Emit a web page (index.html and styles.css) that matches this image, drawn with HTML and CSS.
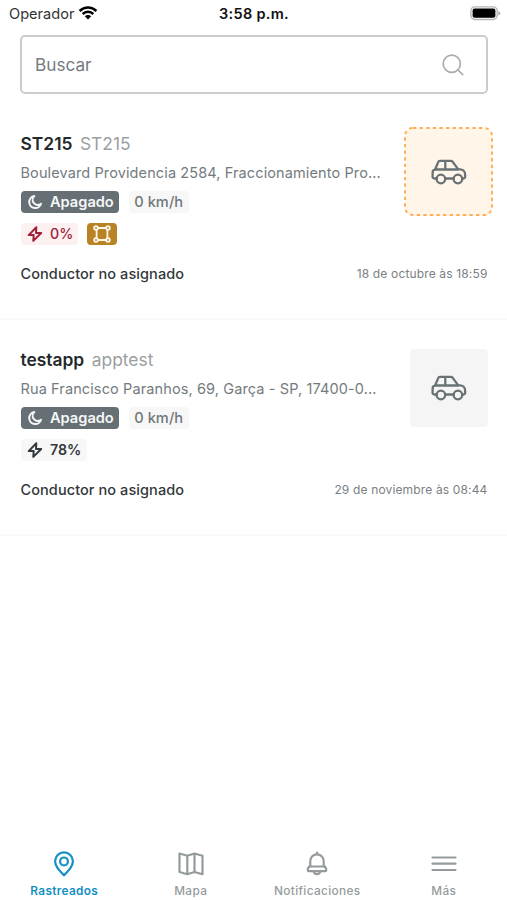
FILE: index.html
```
<!DOCTYPE html>
<html lang="es">
<head>
<meta charset="utf-8">
<title>Rastreados</title>
<link rel="stylesheet" href="styles.css">
</head>
<body>
<svg class="defs" width="0" height="0" aria-hidden="true">
  <symbol id="car" viewBox="0 0 36 26">
    <path d="M5.900 19.500H3.200a1.600 1.600 0 0 1-1.600-1.600v-4.100c0-1.800.8-2.900 2.400-3.100L7.300 2.900a1.700 1.700 0 0 1 1.600-1.100h10.800a2.400 2.400 0 0 1 2 1l5.600 7.600h1.800a5 5 0 0 1 5 5v2.500a1.600 1.600 0 0 1-1.600 1.600h-1.500M14 19.500h8.800M4.200 10.500h23M14.300 1.800v8.700"/>
    <circle cx="9.900" cy="20" r="4.300"/><circle cx="26.900" cy="20" r="4.300"/>
  </symbol>
  <symbol id="moon" viewBox="0 0 16 16">
    <path d="M7.400 2.100A6 6 0 1 0 14 9.700 4.700 4.700 0 0 1 7.400 2.100Z"/>
  </symbol>
  <symbol id="bolt" viewBox="0 0 16 16">
    <path d="M9.300 1.300 1.700 9.100h5L6.300 14.900l7.900-7.900H9Z"/>
  </symbol>
</svg>
<header class="status">
  <div class="carrier">Operador
    <svg width="20" height="14" viewBox="0 0 20 14"><path d="M1.600 5a12 12 0 0 1 16.800 0M4.700 8a7.600 7.600 0 0 1 10.600 0"/><path class="solid" d="M10 13.400 6.800 10.200a4.600 4.600 0 0 1 6.400 0Z"/></svg>
  </div>
  <div class="clock">3:58 p.m.</div>
  <svg class="battery" width="31" height="15" viewBox="0 0 31 15"><rect class="shell" x=".9" y=".9" width="26.200" height="12.600" rx="4"/><rect x="2.600" y="2.600" width="22.800" height="9.200" rx="1.800"/><path class="tip" d="M28.300 5v4.600q2-.8 2-2.300t-2-2.300Z"/></svg>
</header>
<div class="search">
  <span>Buscar</span>
  <svg width="22" height="22" viewBox="0 0 22 22"><circle cx="9.800" cy="9.800" r="8.600"/><path d="m16 16 4.700 4.700"/></svg>
</div>
<main>
  <article class="card">
    <div class="top">
      <div class="info">
        <h2>ST215<span class="alias">ST215</span></h2>
        <p class="address">Boulevard Providencia 2584, Fraccionamiento Pro...</p>
        <div class="chips"><span class="chip off"><svg><use href="#moon"/></svg>Apagado</span><span class="chip speed">0 km/h</span></div>
        <div class="chips"><span class="chip low"><svg><use href="#bolt"/></svg>0%</span><span class="chip fence"><svg viewBox="0 0 18 18"><path d="M4.800 3H13.200M4.800 15H13.200M3.600 4.800V13.200M14.400 4.800V13.200"/><circle cx="3" cy="3" r="1.800"/><circle cx="15" cy="3" r="1.800"/><circle cx="3" cy="15" r="1.800"/><circle cx="15" cy="15" r="1.800"/></svg></span></div>
      </div>
      <div class="thumb alert"><svg class="dash" width="89" height="89"><rect x="1" y="1" width="87" height="87" rx="8"/></svg><svg class="car"><use href="#car"/></svg></div>
    </div>
    <div class="bottom"><span class="driver">Conductor no asignado</span><time>18 de octubre às 18:59</time></div>
  </article>
  <article class="card">
    <div class="top">
      <div class="info">
        <h2>testapp<span class="alias">apptest</span></h2>
        <p class="address">Rua Francisco Paranhos, 69, Garça - SP, 17400-0...</p>
        <div class="chips"><span class="chip off"><svg><use href="#moon"/></svg>Apagado</span><span class="chip speed">0 km/h</span></div>
        <div class="chips"><span class="chip level"><svg><use href="#bolt"/></svg>78%</span></div>
      </div>
      <div class="thumb"><svg class="car"><use href="#car"/></svg></div>
    </div>
    <div class="bottom"><span class="driver">Conductor no asignado</span><time>29 de noviembre às 08:44</time></div>
  </article>
</main>
<nav>
  <a class="active"><svg viewBox="0 0 26 26"><path d="M13 24.300C7.500 18.500 4.100 14.800 4.100 10.200a8.900 8.900 0 0 1 17.800 0c0 4.600-3.400 8.300-8.900 14.100Z"/><circle cx="13" cy="10.400" r="3.900"/></svg>Rastreados</a>
  <a><svg viewBox="0 0 26 26"><path d="M1.500 2.500 9.300 4.700 16.500 2.500 24.500 4.700V23.200L16.500 21 9.300 23.200 1.500 21ZM9.300 4.700V23.200M16.500 2.500V21"/></svg>Mapa</a>
  <a><svg viewBox="0 0 26 26"><path d="M13 1.500v2M6.300 15.500V10a6.700 6.700 0 0 1 13.400 0v5.500M6.300 15.500q-2.500.8-2.500 2.800v1q0 .8.8.800H21.400q.8 0 .8-.8v-1q0-2-2.500-2.800M5 15.500H21M9.800 20.700a3.300 3.300 0 0 0 6.400 0"/></svg>Notificaciones</a>
  <a><svg viewBox="0 0 26 26"><path d="M1.500 6.500H24.500M1.500 12.700H24.500M1.500 19H24.500"/></svg>Más</a>
</nav>
</body>
</html>
```
FILE: styles.css
```
* { box-sizing: border-box; }
body { margin: 0; height: 900px; display: flex; flex-direction: column; background: #fff; color: #32383b; font-family: Inter, sans-serif; overflow: hidden; }
h2, p { margin: 0; }
svg { display: block; flex: none; fill: none; stroke: currentColor; stroke-width: 2; stroke-linecap: round; stroke-linejoin: round; }
.defs { position: absolute; }
.status { height: 35px; padding: 0 6px 8px 7px; display: grid; grid-template-columns: 1fr auto 1fr; align-items: center; color: #111; }
.carrier { display: flex; align-items: center; gap: 4px; padding-left: 2px; font-size: 14.600px; color: #333; }
.carrier svg { position: relative; top: -1px; color: #000; stroke-width: 2.500; stroke-linecap: butt; }
.carrier .solid { fill: #000; stroke: none; }
.clock { font-size: 14.500px; font-weight: 600; letter-spacing: .3px; }
.battery { justify-self: end; stroke: none; fill: #000; }
.battery .shell { fill: none; stroke: #b5b5b5; stroke-width: 1.400; }
.battery .tip { fill: #aaa; }
.search { height: 59px; margin: 0 19px 0 20px; padding: 0 22px 0 13px; display: flex; align-items: center; justify-content: space-between; border: 2px solid #ccc; border-radius: 5px; font-size: 17.200px; color: #747b7e; }
.search svg { color: #a9adaf; stroke-width: 1.700; }
main { flex: 1; padding-top: 9px; }
.card { height: 216.400px; padding: 29.500px 19.500px 0 20.500px; border-bottom: 2px solid #f8f9f9; }
.card:first-child { margin-top: .5px; }
.top { display: flex; justify-content: space-between; height: 124.500px; }
h2 { font-size: 17.400px; line-height: 22px; font-weight: 600; color: #23292c; white-space: nowrap; }
.alias { margin-left: 7.500px; font-weight: 400; color: #9a9fa1; }
.address { margin-top: 7.500px; font-size: 14.500px; line-height: 20px; letter-spacing: .115px; color: #747b7e; white-space: nowrap; }
.chips { display: flex; gap: 10px; margin-top: 8px; height: 22px; }
.chips + .chips { margin-top: 10px; }
.chip { display: flex; align-items: center; height: 22px; border-radius: 4px; padding: 0 5px 0 6.500px; gap: 7px; font-size: 14.600px; font-weight: 600; background: #f7f7f8; }
.chip svg { width: 16px; height: 16px; stroke-width: 2; }
.off { background: #667074; color: #f5f7f8; }
.speed { padding: 0 5.500px; font-weight: 500; color: #70777a; letter-spacing: .05px; }
.low { background: #fdf0f0; color: #9f2039; font-weight: 500; }
.level { font-size: 14.200px; padding-right: 6px; }
.chip.low { font-size: 14.200px; padding-right: 5px; }
.chip.fence { width: 30px; padding: 0; margin-left: -1px; justify-content: center; background: #b98225; color: #fff8e8; }
.chip.fence svg { width: 18px; height: 18px; stroke-width: 1.800; }
.thumb { position: relative; width: 78px; height: 78px; display: flex; align-items: center; justify-content: center; background: #f5f5f5; border-radius: 4px; color: #687175; }
.alert { background: #fff6e9; box-shadow: 0 0 0 5px #fff6e9; }
.dash { position: absolute; left: -6px; top: -6px; color: #ffad55; stroke-dasharray: 3.300 3.300; stroke-linecap: butt; stroke-width: 1.900; }
.car { width: 36px; height: 26px; stroke-width: 2.300; }
.bottom { display: flex; align-items: center; justify-content: space-between; height: 32px; }
.driver { font-size: 14.500px; font-weight: 500; letter-spacing: .08px; }
time { font-size: 12px; letter-spacing: .15px; color: #7a8083; }
nav { height: 52px; padding-left: 1px; display: grid; grid-template-columns: repeat(4, 1fr); }
nav a { display: flex; flex-direction: column; align-items: center; gap: 6px; font-size: 11.800px; font-weight: 500; line-height: 16px; letter-spacing: .35px; color: #959b9d; }
nav svg { width: 26px; height: 26px; margin-top: 3px; stroke-width: 2.200; }
nav .active { color: #1590c3; font-weight: 600; }
```
